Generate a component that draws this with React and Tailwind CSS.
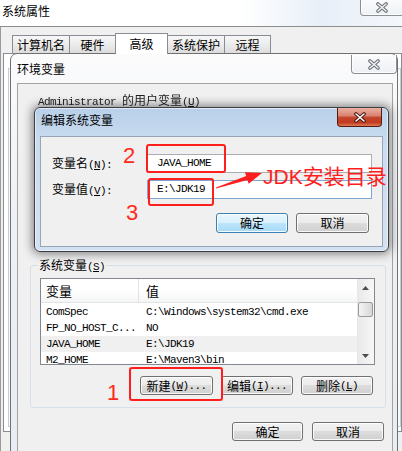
import React from "react";

const cjk = "font-['Noto_Sans_CJK_SC',sans-serif]";
const mono = "font-['Liberation_Mono','Noto_Sans_CJK_SC',monospace] text-[11px] tracking-[-0.6px]";

// X glyph used on caption buttons
function XGlyph({ outer = "#5a5a5a", inner = "#f2f2f2" }) {
  return (
    <svg width="14" height="11" viewBox="0 0 14 11">
      <path d="M3 2 L11 9 M11 2 L3 9" stroke={outer} strokeWidth="3.6" strokeLinecap="round" />
      <path d="M3 2 L11 9 M11 2 L3 9" stroke={inner} strokeWidth="1.6" strokeLinecap="round" />
    </svg>
  );
}

function GlassClose({ className }) {
  return (
    <div
      className={`flex items-center justify-center rounded-b-[4px] border border-t-0 border-[#8a8f96] bg-[linear-gradient(#fafbfc,#eef1f5)] shadow-[inset_0_0_0_1px_rgba(255,255,255,0.8)] ${className}`}
    >
      <XGlyph outer="#6b6f75" inner="#eef0f3" />
    </div>
  );
}

function Key({ k, tail = "" }) {
  return (
    <span className={mono}>
      (<span className="underline underline-offset-[1px]">{k}</span>){tail}
    </span>
  );
}

function WinButton({ children, primary, className = "" }) {
  const skin = primary
    ? "border-[#3c7fb1] bg-[linear-gradient(#eaf6fd,#d9f0fc_50%,#bee6fd_50%,#a7d9f5)]"
    : "border-[#707070] bg-[linear-gradient(#f2f2f2,#ebebeb_50%,#dddddd_50%,#cfcfcf)]";
  return (
    <div
      className={`flex items-center justify-center rounded-[3px] border text-[12px] leading-[14px] shadow-[inset_0_0_0_1px_rgba(255,255,255,0.85)] ${skin} ${className}`}
    >
      {children}
    </div>
  );
}

function Tab({ label, active, className = "" }) {
  return (
    <div
      className={`flex items-center justify-center border border-b-0 border-[#898c95] text-[12px] leading-[14px] ${
        active
          ? "relative z-10 h-[21px] -mb-px bg-white"
          : "h-[18px] bg-[linear-gradient(#f7f7f7,#ececec_50%,#dcdcdc)]"
      } ${className}`}
    >
      {label}
    </div>
  );
}

function Arrow({ up }) {
  return (
    <svg width="7" height="4" viewBox="0 0 7 4">
      <path d={up ? "M0 4 L3.5 0 L7 4 Z" : "M0 0 L3.5 4 L7 0 Z"} fill="#4d4d4d" />
    </svg>
  );
}

const rows = [
  ["ComSpec", "C:\\Windows\\system32\\cmd.exe"],
  ["FP_NO_HOST_C...", "NO"],
  ["JAVA_HOME", "E:\\JDK19"],
  ["M2_HOME", "E:\\Maven3\\bin"],
];

export default function App() {
  return (
    <div className={`relative w-[402px] h-[451px] overflow-hidden bg-[#f0f0f0] text-black ${cjk}`}>
      {/* 系统属性 window */}
      <div className="flex h-full flex-col">
        <div className="flex h-[27px] justify-between border-b border-[#8d8d8d] bg-[linear-gradient(90deg,#ffffff_60%,#e8eff8_80%,#f4f7fb)]">
          <span className="pl-[2px] pt-[4px] text-[12px] leading-[14px]">系统属性</span>
          <GlassClose className="-mt-px h-[17px] w-[44px] -mr-[2px]" />
        </div>
        <div className="flex flex-1 flex-col border-l border-[#9a9a9a]">
          <div className="flex items-end pl-[11px] pt-[6px]">
            <Tab label="计算机名" className="w-[58px]" />
            <Tab label="硬件" className="-ml-px w-[47px]" />
            <Tab label="高级" active className="-ml-px w-[53px]" />
            <Tab label="系统保护" className="-ml-px w-[58px]" />
            <Tab label="远程" className="-ml-px w-[47px]" />
          </div>
          <div className="mb-[19px] ml-[2px] flex-1 border border-[#898c95] bg-white pl-[4px] pt-[14px] pb-[4px]">
            <div className="h-full border border-[#c8ccd2] bg-[#fafafa]" />
          </div>
        </div>
      </div>

      {/* 环境变量 window */}
      <div className="absolute left-[10px] top-[53px] flex h-[410px] w-[388px] flex-col rounded-t-[7px] border border-[#707070] bg-[linear-gradient(#fbfbfc,#eef1f5_40%,#e7edf4)]">
        <div className="flex h-[29px] justify-between">
          <span className="pl-[6px] pt-[8px] text-[12px] leading-[14px]">环境变量</span>
          <GlassClose className="mt-px h-[19px] w-[46px]" />
        </div>
        <div className="ml-[6px] mr-[4px] flex-1 border border-[#a3a3a3] bg-[#f0f0f0]">
          <p className="h-[24px] pl-[20px] pt-[10px] text-[12px] leading-[12px] text-[#222] blur-[0.4px]">
            <span className={mono}>Administrator </span>的用户变量<Key k="U" />
          </p>

          {/* 系统变量 group */}
          <div className="relative ml-[12px] mt-[157px] w-[356px] rounded-[3px] border border-[#d5dfe5] pt-[12px] pb-[12px]">
            <span className="absolute -top-[8px] left-[7px] bg-[#f0f0f0] px-px text-[12px] leading-[14px]">
              系统变量<Key k="S" />
            </span>
            <div className="ml-[9px] flex h-[87px] w-[335px] overflow-hidden border border-[#828790] bg-white">
              <div className="flex flex-1 flex-col">
                <div className="flex h-[24px] shrink-0 border-b border-[#e3e3e3] bg-[linear-gradient(#ffffff,#ffffff_50%,#f4f5f6)] text-[13px] leading-[16px]">
                  <div className="flex w-[98px] items-center border-r border-[#e3e3e3] pl-[5px]">变量</div>
                  <div className="flex items-center pl-[7px]">值</div>
                </div>
                <div className="pt-px">
                  {rows.map(([name, value]) => (
                    <div
                      key={name}
                      className={`flex h-[16px] items-center ${mono} ${name === "JAVA_HOME" ? "bg-[#f0f0f0]" : ""}`}
                    >
                      <span className="w-[98px] pl-[5px] whitespace-nowrap">{name}</span>
                      <span className="pl-[7px] whitespace-nowrap">{value}</span>
                    </div>
                  ))}
                </div>
              </div>
              <div className="flex w-[17px] flex-col items-center bg-[linear-gradient(90deg,#e8e8e8,#f7f7f7)]">
                <div className="flex h-[17px] w-full items-center justify-center">
                  <Arrow up />
                </div>
                <div className="mt-[6px] h-[15px] w-[15px] rounded-[2px] border border-[#9a9a9a] bg-[linear-gradient(90deg,#f4f4f4,#e6e6e6_50%,#d6d6d6)]" />
                <div className="flex-1" />
                <div className="flex h-[17px] w-full items-center justify-center">
                  <Arrow />
                </div>
              </div>
            </div>
            <div className="mt-[11px] flex justify-end gap-[8px] pr-[12px]">
              <WinButton className="h-[19px] w-[73px]">
                新建<Key k="W" tail="..." />
              </WinButton>
              <WinButton className="h-[19px] w-[72px]">
                编辑<Key k="I" tail="..." />
              </WinButton>
              <WinButton className="h-[19px] w-[72px]">
                删除<Key k="L" />
              </WinButton>
            </div>
          </div>

          <div className="mt-[14px] flex justify-end gap-[9px] pr-[8px]">
            <WinButton className="h-[19px] w-[71px]">确定</WinButton>
            <WinButton className="h-[19px] w-[72px]">取消</WinButton>
          </div>
        </div>
      </div>

      {/* 编辑系统变量 dialog */}
      <div className="absolute left-[34px] top-[107px] flex h-[145px] w-[355px] flex-col rounded-[6px] border border-[#3b3f44] bg-[linear-gradient(#b9d0ea,#cadcef_25%,#d3e2f2)] shadow-[0_0_10px_2px_rgba(0,0,0,0.45),inset_0_0_0_1px_rgba(255,255,255,0.55)]">
        <div className="flex h-[28px] justify-between">
          <span className="pl-[6px] pt-[5px] text-[12px] leading-[14px]">编辑系统变量</span>
          <div className="mr-[6px] flex h-[19px] w-[45px] items-center justify-center rounded-b-[4px] border border-t-0 border-[#5b1a10] bg-[linear-gradient(#eab0a2,#d9806f_45%,#c4472f_50%,#c23a1f_80%,#dc7a55)]">
            <XGlyph outer="#4a1a12" inner="#ffffff" />
          </div>
        </div>
        <div className="mx-[5px] mb-[4px] flex-1 border border-[#97a6b6] bg-[#f0f0f0]">
          <div className="mt-[17px] flex h-[19px] items-center">
            <span className="w-[106px] pl-[11px] text-[12px] leading-[14px]">
              变量名<Key k="N" tail=":" />
            </span>
            <div className={`flex h-[19px] w-[225px] items-center border border-[#abadb3] bg-white pl-[9px] ${mono}`}>
              JAVA_HOME
            </div>
          </div>
          <div className="mt-[7px] flex h-[19px] items-center">
            <span className="w-[106px] pl-[11px] text-[12px] leading-[14px]">
              变量值<Key k="V" tail=":" />
            </span>
            <div className={`flex h-[19px] w-[225px] items-center border border-[#7ea7d0] bg-white pl-[9px] ${mono}`}>
              E:\JDK19
            </div>
          </div>
          <div className="mt-[14px] flex justify-end gap-[8px] pr-[13px]">
            <WinButton primary className="h-[20px] w-[72px]">确定</WinButton>
            <WinButton className="h-[20px] w-[73px]">取消</WinButton>
          </div>
        </div>
      </div>

      {/* red annotations */}
      <div className="absolute left-[146px] top-[144px] h-[29px] w-[80px] rounded-[3px] border-2 border-[#ff1e1e]" />
      <div className="absolute left-[148px] top-[178px] h-[28px] w-[66px] rounded-[3px] border-2 border-[#ff1e1e]" />
      <div className="absolute left-[129px] top-[367px] h-[34px] w-[94px] rounded-[3px] border-2 border-[#ff1e1e]" />
      <span className="absolute left-[123px] top-[145px] font-['Liberation_Sans',sans-serif] text-[22px] leading-none text-[#ff2a1a]">2</span>
      <span className="absolute left-[126px] top-[202px] font-['Liberation_Sans',sans-serif] text-[22px] leading-none text-[#ff2a1a]">3</span>
      <span className="absolute left-[107px] top-[382px] font-['Liberation_Sans',sans-serif] text-[22px] leading-none text-[#ff2a1a]">1</span>
      <svg className="absolute left-[210px] top-[160px]" width="60" height="35" viewBox="0 0 60 35">
        <polygon
          points="6,28.4 37.4,19.9 38.7,23.7 52,13 34.9,12.3 36.2,16.1 6,27.6"
          fill="#ff1e1e"
        />
      </svg>
      <span className="absolute left-[263px] top-[166px] whitespace-nowrap font-['Liberation_Sans','Noto_Sans_CJK_SC',sans-serif] text-[21px] leading-none text-[#ff1e1e]">
        JDK安装目录
      </span>
    </div>
  );
}
